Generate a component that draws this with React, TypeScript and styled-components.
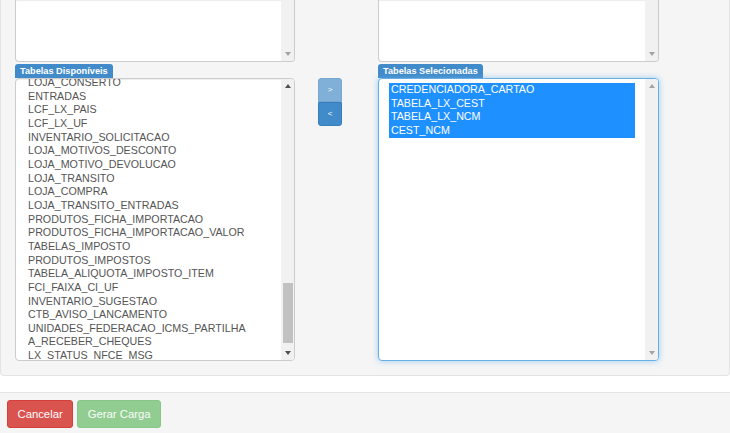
import React from "react";
import styled, { createGlobalStyle } from "styled-components";

const GlobalStyle = createGlobalStyle`
  html, body { margin: 0; padding: 0; background: #ffffff; }
  body { font-family: "Liberation Sans", Arial, sans-serif; }
  #root { min-height: 100vh; display: flex; flex-direction: column; }
`;

const Page = styled.div`
  flex: 1;
  display: flex;
  flex-direction: column;
  min-height: 433px;
`;

const Well = styled.section`
  background: #f5f5f5;
  border: 1px solid #e3e3e3;
  border-top: none;
  border-radius: 0 0 4px 4px;
  padding: 0 14px 14px 14px;
  display: grid;
  grid-template-columns: 280px 83px 281px;
  grid-template-rows: 62px 16px 283px;
`;

const Box = styled.div<{ $cut?: boolean; $focus?: boolean; $col: number }>`
  grid-column: ${(p) => p.$col};
  display: flex;
  background: #fff;
  border: 1px solid ${(p) => (p.$focus ? "#66afe9" : "#cccccc")};
  border-radius: ${(p) => (p.$cut ? "0 0 4px 4px" : "4px")};
  ${(p) => (p.$cut ? "border-top: none;" : "")}
  ${(p) => (p.$focus ? "box-shadow: 0 0 6px rgba(102,175,233,.6);" : "box-shadow: inset 0 1px 1px rgba(0,0,0,.075);")}
  overflow: hidden;
  min-height: 0;
`;

const Content = styled.div<{ $scrolled?: boolean }>`
  flex: 1;
  overflow: hidden;
  padding: ${(p) => (p.$scrolled ? `0 10px` : `4px 10px`)};
`;

const Items = styled.ul<{ $shift?: number }>`
  list-style: none;
  margin: ${(p) => (p.$shift ? `${-p.$shift}px` : "0")} 0 0 0;
  padding: 0;
  font-size: 10.7px;
  line-height: 13.65px;
  color: #555;
`;

const Item = styled.li<{ $selected?: boolean }>`
  padding: 0 2px;
  white-space: nowrap;
  background: ${(p) => (p.$selected ? "#1e90ff" : "transparent")};
  color: ${(p) => (p.$selected ? "#fff" : "inherit")};
`;

const Scrollbar = styled.div`
  width: 13px;
  background: #f1f1f1;
  display: flex;
  flex-direction: column;
  flex-shrink: 0;
`;

const ArrowCell = styled.div`
  height: 14px;
  display: flex;
  align-items: center;
  justify-content: center;
  flex-shrink: 0;
`;

const Triangle = styled.span<{ $up?: boolean; $dark?: boolean }>`
  width: 0;
  height: 0;
  border-left: 3.5px solid transparent;
  border-right: 3.5px solid transparent;
  ${(p) => (p.$up ? "border-bottom" : "border-top")}: 4px solid ${(p) => (p.$dark ? "#505050" : "#a3a3a3")};
`;

const Track = styled.div`
  flex: 1;
  display: flex;
  flex-direction: column;
`;

const Thumb = styled.div`
  margin: 0 1.5px;
  background: #c1c1c1;
`;

const Label = styled.div<{ $col: number }>`
  grid-column: ${(p) => p.$col};
  grid-row: 2;
  align-self: end;
  justify-self: start;
  height: 14px;
  line-height: 14px;
  padding: 0 5px;
  background: #428bca;
  color: #fff;
  font-size: 9.2px;
  font-weight: bold;
  border-radius: 3px 3px 0 0;
`;

const Transfer = styled.div`
  grid-column: 2;
  grid-row: 3;
  padding-left: 23px;
  display: flex;
  flex-direction: column;
  align-items: flex-start;
`;

const TransferBtn = styled.button<{ $first?: boolean; $disabled?: boolean }>`
  width: 24px;
  height: 24px;
  margin: 0;
  padding: 0;
  border: 1px solid #357ebd;
  background: #428bca;
  opacity: ${(p) => (p.$disabled ? 0.65 : 1)};
  color: #fff;
  font-family: "Liberation Sans", Arial, sans-serif;
  font-size: 8px;
  line-height: 1;
  border-radius: ${(p) => (p.$first ? "3px 3px 0 0" : "0 0 3px 3px")};
`;

const Footer = styled.footer`
  margin-top: 16px;
  flex: 1;
  background: #f5f5f5;
  border-top: 1px solid #e5e5e5;
  padding: 7px;
  display: flex;
  align-items: flex-start;
  gap: 4px;
`;

const Btn = styled.button<{ $variant: "danger" | "success"; $disabled?: boolean }>`
  height: 28px;
  padding: 0 9.5px;
  border-radius: 3px;
  font-family: "Liberation Sans", Arial, sans-serif;
  font-size: 11.3px;
  color: #fff;
  border: 1px solid ${(p) => (p.$variant === "danger" ? "#d43f3a" : "#4cae4c")};
  background: ${(p) => (p.$variant === "danger" ? "#d9534f" : "#5cb85c")};
  opacity: ${(p) => (p.$disabled ? 0.65 : 1)};
`;

const available = [
  "LOJA_CONSERTO",
  "ENTRADAS",
  "LCF_LX_PAIS",
  "LCF_LX_UF",
  "INVENTARIO_SOLICITACAO",
  "LOJA_MOTIVOS_DESCONTO",
  "LOJA_MOTIVO_DEVOLUCAO",
  "LOJA_TRANSITO",
  "LOJA_COMPRA",
  "LOJA_TRANSITO_ENTRADAS",
  "PRODUTOS_FICHA_IMPORTACAO",
  "PRODUTOS_FICHA_IMPORTACAO_VALOR",
  "TABELAS_IMPOSTO",
  "PRODUTOS_IMPOSTOS",
  "TABELA_ALIQUOTA_IMPOSTO_ITEM",
  "FCI_FAIXA_CI_UF",
  "INVENTARIO_SUGESTAO",
  "CTB_AVISO_LANCAMENTO",
  "UNIDADES_FEDERACAO_ICMS_PARTILHA",
  "A_RECEBER_CHEQUES",
  "LX_STATUS_NFCE_MSG",
];

const selected = ["CREDENCIADORA_CARTAO", "TABELA_LX_CEST", "TABELA_LX_NCM", "CEST_NCM"];

function Bar({ dark, top, up = true, thumb }: { dark?: boolean; top?: number; up?: boolean; thumb?: number }) {
  return (
    <Scrollbar>
      {up && (
        <ArrowCell>
          <Triangle $up $dark={dark} />
        </ArrowCell>
      )}
      <Track>
        {thumb !== undefined && <Thumb style={{ marginTop: top, height: thumb }} />}
      </Track>
      <ArrowCell>
        <Triangle $dark={dark} />
      </ArrowCell>
    </Scrollbar>
  );
}

export default function App() {
  return (
    <Page>
      <GlobalStyle />
      <Well>
        <Box $col={1} $cut>
          <Content />
          <Bar up={false} />
        </Box>
        <Box $col={3} $cut>
          <Content />
          <Bar up={false} />
        </Box>
        <Label $col={1}>Tabelas Disponíveis</Label>
        <Label $col={3}>Tabelas Selecionadas</Label>
        <Box $col={1}>
          <Content $scrolled>
            <Items $shift={3}>
              {available.map((t) => (
                <Item key={t}>{t}</Item>
              ))}
            </Items>
          </Content>
          <Bar dark top={190} thumb={60} />
        </Box>
        <Transfer>
          <TransferBtn $first $disabled>&gt;</TransferBtn>
          <TransferBtn>&lt;</TransferBtn>
        </Transfer>
        <Box $col={3} $focus>
          <Content>
            <Items>
              {selected.map((t) => (
                <Item key={t} $selected>
                  {t}
                </Item>
              ))}
            </Items>
          </Content>
          <Bar />
        </Box>
      </Well>
      <Footer>
        <Btn $variant="danger">Cancelar</Btn>
        <Btn $variant="success" $disabled>
          Gerar Carga
        </Btn>
      </Footer>
    </Page>
  );
}
